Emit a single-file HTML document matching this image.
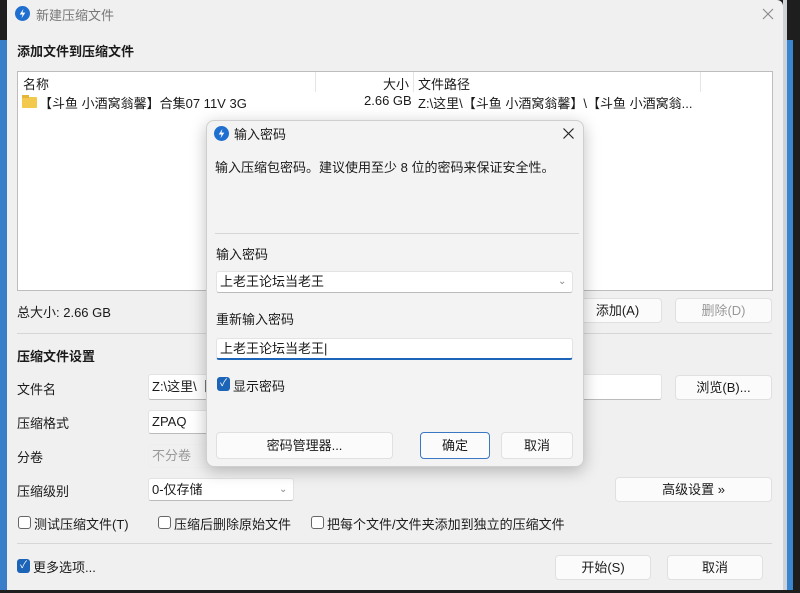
<!DOCTYPE html><html><head><meta charset="utf-8"><style>
*{box-sizing:border-box;margin:0;padding:0}
body{width:800px;height:593px;overflow:hidden;background:#1e1e1e;position:relative;font-family:"Liberation Sans","Noto Sans CJK SC",sans-serif;font-size:13px;color:#1a1a1a}
.a{position:absolute;white-space:nowrap}
#win{position:absolute;left:7px;top:0;width:776px;height:590px;background:#f0f0f0;border-radius:0 6px 0 0;overflow:hidden}
.btn{position:absolute;background:#fbfbfb;border:1px solid #e0e0e0;border-radius:4px;text-align:center;line-height:23px}
.inp{position:absolute;background:#fff;border:1px solid #e3e3e3;border-bottom-color:#bbb;border-radius:3px;padding-left:3px;line-height:22px;overflow:hidden}
.cb{position:absolute;width:13px;height:13px;border:1px solid #666;border-radius:3px;background:#fff}
.cbc{position:absolute;width:13px;height:14px;border-radius:3px;background:#1c64b8;color:#fff;font-size:10px;line-height:14px;text-align:center}
.sep{position:absolute;height:1px;background:#d6d6d6}
.b{font-weight:bold}
</style></head><body>
<div class="a" style="left:0;top:40px;width:7px;height:550px;background:#3a7dc8"></div>
<div class="a" style="left:785px;top:40px;width:8px;height:550px;background:#3a85d0"></div>
<div class="a" style="left:783px;top:0;width:4px;height:590px;background:#cfd3d8"></div>
<div id="win">
<svg class="a" style="left:8px;top:6px" width="15" height="15" viewBox="0 0 16 16"><circle cx="8" cy="8" r="8" fill="#1f6fd0"/><path d="M9 3L5 9h3l-1 4 4-6H8z" fill="#fff"/></svg>
<div class="a" style="left:29px;top:5px;color:#777;font-size:13px">新建压缩文件</div>
<svg class="a" style="left:755px;top:8px" width="12" height="12" viewBox="0 0 12 12"><path d="M1 1L11 11M11 1L1 11" stroke="#888" stroke-width="1.1"/></svg>
<div class="a b" style="left:10px;top:41px">添加文件到压缩文件</div>
<div class="a" style="left:10px;top:71px;width:756px;height:220px;background:#fff;border:1px solid #bdbdbd">
 <div class="a" style="left:5px;top:2px">名称</div>
 <div class="a" style="left:297px;top:0;width:1px;height:20px;background:#e5e5e5"></div>
 <div class="a" style="left:365px;top:2px">大小</div>
 <div class="a" style="left:395px;top:0;width:1px;height:20px;background:#e5e5e5"></div>
 <div class="a" style="left:400px;top:2px">文件路径</div>
 <div class="a" style="left:682px;top:0;width:1px;height:20px;background:#e5e5e5"></div>
 <div class="a" style="left:4px;top:25px;width:15px;height:11px;background:#f2c94c;border-radius:1px"></div>
 <div class="a" style="left:4px;top:23px;width:7px;height:3px;background:#e5b53a"></div>
 <div class="a" style="left:21px;top:21px">【斗鱼 小酒窝翁馨】合集07 11V 3G</div>
 <div class="a" style="left:346px;top:21px">2.66 GB</div>
 <div class="a" style="left:400px;top:21px">Z:\这里\【斗鱼 小酒窝翁馨】\【斗鱼 小酒窝翁...</div>
</div>
<div class="a" style="left:10px;top:302px">总大小: 2.66 GB</div>
<div class="btn" style="left:566px;top:298px;width:89px;height:25px">添加(A)</div>
<div class="btn" style="left:668px;top:298px;width:97px;height:25px;color:#999">删除(D)</div>
<div class="sep" style="left:10px;top:333px;width:755px"></div>
<div class="a b" style="left:10px;top:346px">压缩文件设置</div>
<div class="a" style="left:10px;top:379px">文件名</div>
<div class="inp" style="left:141px;top:374px;width:514px;height:26px;line-height:24px">Z:\这里\【斗鱼 小酒窝翁馨】\【斗鱼 小酒窝翁馨】合集07 11V 3G.zpaq</div>
<div class="btn" style="left:668px;top:375px;width:97px;height:25px">浏览(B)...</div>
<div class="a" style="left:10px;top:413px">压缩格式</div>
<div class="inp" style="left:141px;top:410px;width:150px;height:24px">ZPAQ</div>
<div class="a" style="left:10px;top:447px">分卷</div>
<div class="inp" style="left:141px;top:444px;width:150px;height:24px;background:#f0f0f0;color:#999;border-color:#eee">不分卷</div>
<div class="a" style="left:10px;top:481px">压缩级别</div>
<div class="inp" style="left:141px;top:478px;width:146px;height:23px">0-仅存储<span class="a" style="left:130px;top:0;color:#888;font-size:10px">⌄</span></div>
<div class="btn" style="left:608px;top:477px;width:157px;height:25px">高级设置 »</div>
<div class="cb" style="left:11px;top:516px"></div><div class="a" style="left:27px;top:514px">测试压缩文件(T)</div>
<div class="cb" style="left:151px;top:516px"></div><div class="a" style="left:167px;top:514px">压缩后删除原始文件</div>
<div class="cb" style="left:304px;top:516px"></div><div class="a" style="left:320px;top:514px">把每个文件/文件夹添加到独立的压缩文件</div>
<div class="sep" style="left:10px;top:543px;width:755px"></div>
<div class="cbc" style="left:10px;top:559px">✓</div><div class="a" style="left:26px;top:557px">更多选项...</div>
<div class="btn" style="left:548px;top:555px;width:96px;height:25px">开始(S)</div>
<div class="btn" style="left:660px;top:555px;width:96px;height:25px">取消</div>
</div>
<div class="a" style="left:206px;top:120px;width:378px;height:347px;background:#f3f3f3;border:1px solid #cfcfcf;border-radius:8px;box-shadow:0 4px 16px rgba(0,0,0,.25)">
<svg class="a" style="left:7px;top:5px" width="15" height="15" viewBox="0 0 16 16"><circle cx="8" cy="8" r="8" fill="#1f6fd0"/><path d="M9 3L5 9h3l-1 4 4-6H8z" fill="#fff"/></svg>
<div class="a" style="left:27px;top:3px">输入密码</div>
<svg class="a" style="left:356px;top:7px" width="11" height="11" viewBox="0 0 11 11"><path d="M.5 .5L10.5 10.5M10.5 .5L.5 10.5" stroke="#222" stroke-width="1.2"/></svg>
<div class="a" style="left:8px;top:36px">输入压缩包密码。建议使用至少 8 位的密码来保证安全性。</div>
<div class="sep" style="left:8px;top:112px;width:364px"></div>
<div class="a" style="left:9px;top:123px">输入密码</div>
<div class="inp" style="left:9px;top:150px;width:357px;height:22px;line-height:20px">上老王论坛当老王<span class="a" style="left:341px;top:0;color:#888;font-size:10px">⌄</span></div>
<div class="a" style="left:9px;top:188px">重新输入密码</div>
<div class="inp" style="left:9px;top:217px;width:357px;height:22px;line-height:20px;border-bottom:2px solid #1c64b8">上老王论坛当老王|</div>
<div class="cbc" style="left:10px;top:256px">✓</div><div class="a" style="left:26px;top:255px">显示密码</div>
<div class="btn" style="left:9px;top:311px;width:177px;height:27px;line-height:25px">密码管理器...</div>
<div class="btn" style="left:213px;top:311px;width:70px;height:27px;line-height:25px;border-color:#3b78c4">确定</div>
<div class="btn" style="left:294px;top:311px;width:72px;height:27px;line-height:25px">取消</div>
</div>
</body></html>
